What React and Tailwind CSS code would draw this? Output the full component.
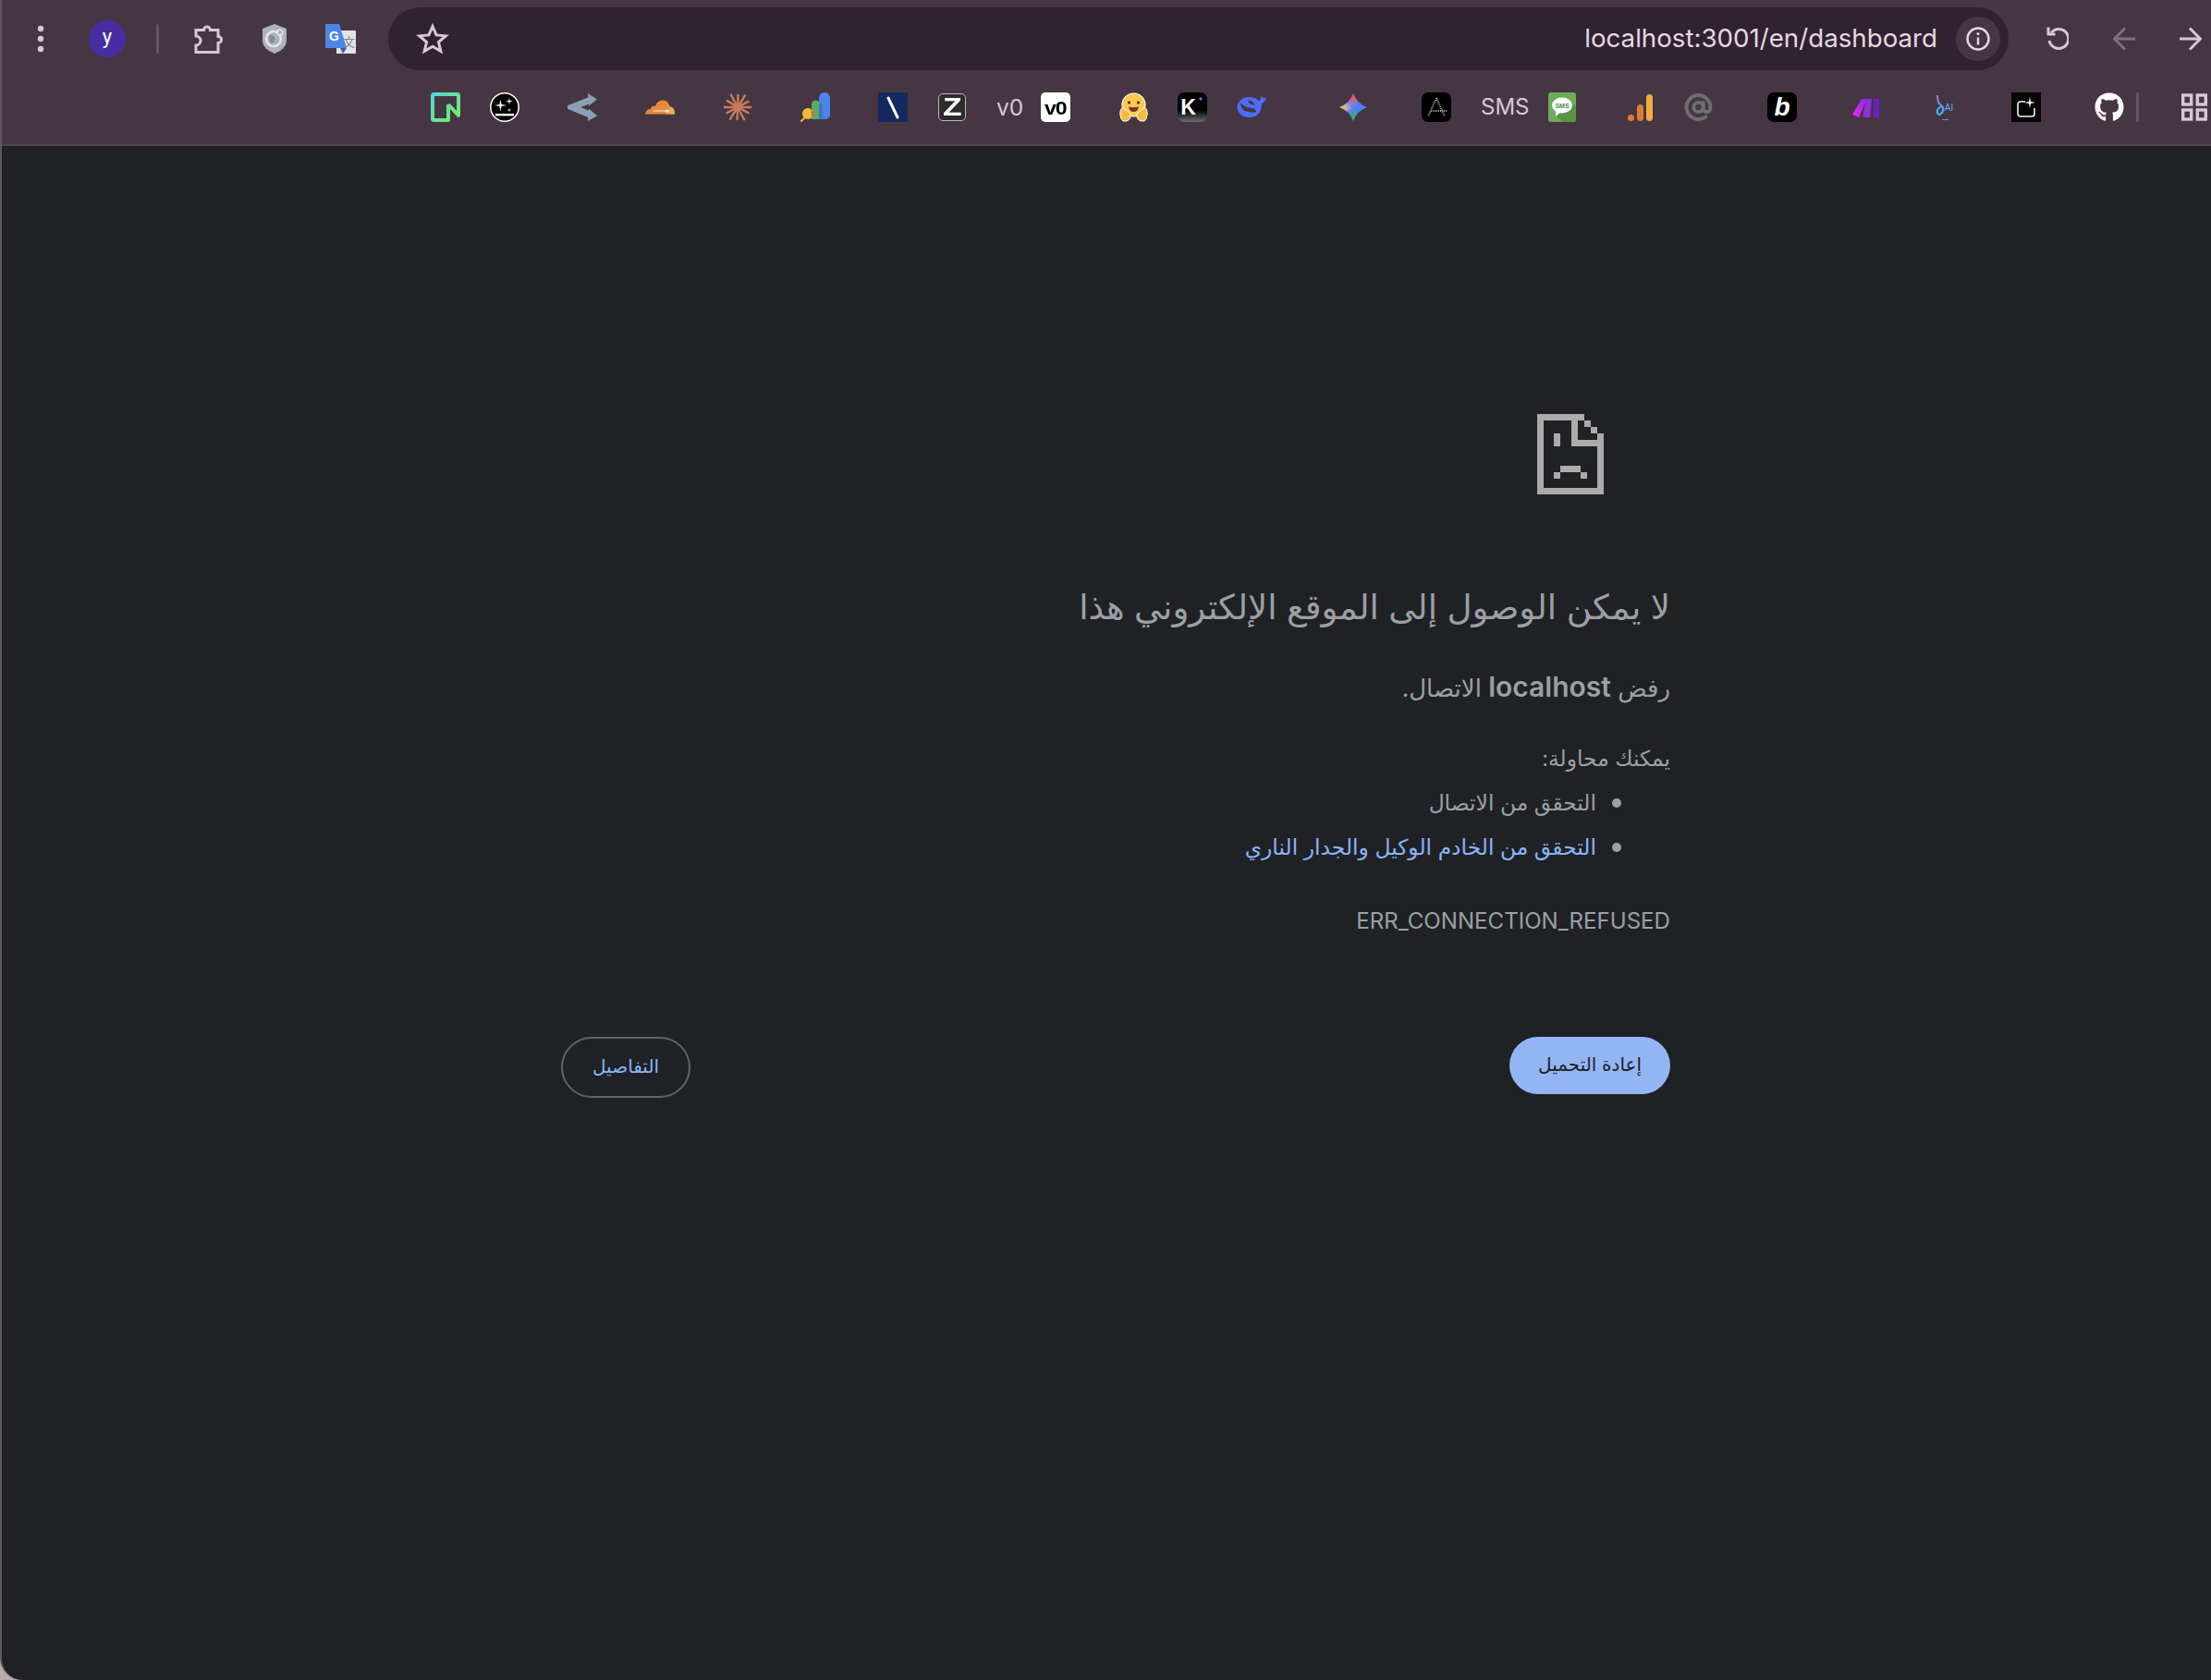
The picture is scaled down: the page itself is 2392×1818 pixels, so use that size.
import React from "react";
import { FaGithub } from "react-icons/fa";
import { AtSign } from "lucide-react";

const ui = "#d8c8d5";

function Puzzle() {
  return (
    <svg viewBox="0 0 32 32" className="ml-[38px] w-[32px] h-[32px]" fill="none" stroke={ui} strokeWidth="3" strokeLinejoin="miter">
      <path d="M2 6.5H10.5A3.5 3.5 0 0 1 17.5 6.5H26V13.5A3.5 3.5 0 0 1 26 20.5V30.5H2V23A5 5 0 0 0 2 13Z" />
    </svg>
  );
}

function Shield() {
  return (
    <svg viewBox="0 0 28 32" className="ml-[41px] w-[28px] h-[32px]">
      <path d="M14 0L27 5V18Q27 27 14 32Q1 27 1 18V5Z" fill="#aeb2ba" />
      <circle cx="13" cy="16" r="8" fill="none" stroke="#e6e7ea" strokeWidth="2.5" />
      <path d="M8 13Q12 10 14 14T11 22Q8 19 8 13Z" fill="#878c96" />
      <circle cx="20" cy="9" r="3" fill="#aeb2ba" stroke="#e6e7ea" strokeWidth="1.5" />
    </svg>
  );
}

function Translate() {
  return (
    <svg viewBox="0 0 33 32" className="ml-[41px] w-[33px] h-[32px]">
      <path d="M12 7H32Q33 7 33 8V31Q33 32 32 32H12Z" fill="#e3e3e3" />
      <path d="M19 32L16 26H23Z" fill="#3f5bb8" />
      <path d="M1 0H15L23 26H1Q0 26 0 25V1Q0 0 1 0Z" fill="#4d86e8" />
      <text x="9.5" y="18" textAnchor="middle" fontSize="14" fontWeight="700" fill="#fff" fontFamily="Liberation Sans, sans-serif">G</text>
      <text x="25.5" y="24" textAnchor="middle" fontSize="13" fill="#7d8a8f" fontFamily="Noto Sans CJK SC, sans-serif">文</text>
    </svg>
  );
}

function Neon() {
  return (
    <svg viewBox="0 0 32 32" className="ml-[466px] w-[32px] h-[32px]" fill="none">
      <defs>
        <linearGradient id="neon" x1="0" y1="0" x2="1" y2="1">
          <stop offset="0" stopColor="#52d5d6" />
          <stop offset="1" stopColor="#74ee5c" />
        </linearGradient>
      </defs>
      <path d="M19 13V30H3.5Q2 30 2 28.5V3.5Q2 2 3.5 2H28.5Q30 2 30 3.5V25L19 13" stroke="url(#neon)" strokeWidth="4" strokeLinejoin="round" />
    </svg>
  );
}

function Star4({ x, y, r }) {
  const k = r * 0.16;
  return <path d={`M${x} ${y - r}L${x + k} ${y - k}L${x + r} ${y}L${x + k} ${y + k}L${x} ${y + r}L${x - k} ${y + k}L${x - r} ${y}L${x - k} ${y - k}Z`} fill="#fff" />;
}

function StarsCircle() {
  return (
    <svg viewBox="0 0 32 32" className="ml-[32px] w-[32px] h-[32px]">
      <circle cx="16" cy="16" r="15.2" fill="#000" stroke="#fff" strokeWidth="1.5" />
      <Star4 x={11.5} y={14} r={6.5} />
      <Star4 x={21} y={9.5} r={4} />
      <Star4 x={21} y={19} r={2.5} />
      <rect x="6" y="23" width="20" height="2.4" fill="#fff" />
    </svg>
  );
}

function Arrows() {
  return (
    <svg viewBox="0 0 32 32" className="ml-[52px] w-[32px] h-[32px]" fill="#8c9fb6">
      <path d="M24 8.5L5 16L24 24" fill="none" stroke="#8c9fb6" strokeWidth="7" />
      <path d="M22 1L32 7.5L23 14.5Z" />
      <path d="M23 17.5L32 25.5L22 31Z" />
    </svg>
  );
}

function Cloudflare() {
  return (
    <svg viewBox="0 0 32 32" className="ml-[52px] w-[32px] h-[32px]">
      <path d="M0 23.5Q1 18 6 18Q7 14 11 15Q13 8 20 8.5Q25 9 26.5 15Q32 16 32 23.5Z" fill="#e88a3a" />
      <path d="M23 23.5Q25 18 27.5 15.5Q32 17 32 23.5Z" fill="#f0ad54" />
      <path d="M9 20H26" stroke="#fff" strokeWidth=".8" />
      <Star4 x={23.5} y={20} r={3} />
    </svg>
  );
}

function Claude() {
  const rays = [0, 28, 62, 92, 122, 152, 180, 212, 242, 272, 302, 332];
  return (
    <svg viewBox="0 0 30 32" className="ml-[53px] w-[30px] h-[32px]" stroke="#c87c5d" strokeWidth="2.4" strokeLinecap="round">
      {rays.map((a, i) => {
        const r = i % 2 ? 13 : 15;
        const t = (a * Math.PI) / 180;
        return <line key={a} x1="15" y1="16" x2={15 + r * Math.cos(t)} y2={16 + r * Math.sin(t)} />;
      })}
    </svg>
  );
}

function Ads() {
  return (
    <svg viewBox="0 0 32 32" className="ml-[53px] w-[32px] h-[32px]">
      <path d="M20 6a6 6 0 0 1 12 0V24a5 5 0 0 1-5 5H20Z" fill="#4a86e8" />
      <path d="M12 13a4.5 4.5 0 0 1 9 0V29H12Z" fill="#5cab5e" />
      <path d="M20 13V29H24V12Q22 11 20 13Z" fill="#3f74c9" />
      <path d="M1 31L6 26" stroke="#f0bb3c" strokeWidth="2" strokeLinecap="round" />
      <circle cx="8" cy="23" r="6" fill="#f0bb3c" />
      <path d="M12 18.5A6 6 0 0 1 12 27.5Z" fill="#d9574a" />
    </svg>
  );
}

function Backslash() {
  return (
    <svg viewBox="0 0 32 32" className="ml-[52px] w-[32px] h-[32px]">
      <rect width="32" height="32" fill="#14295f" />
      <path d="M11 6L21 27" stroke="#fff" strokeWidth="3" strokeLinecap="round" />
    </svg>
  );
}

function ZIcon() {
  return (
    <div className="ml-[33px] w-[30px] h-[30px] rounded-[5px] border border-[#b9b9b9] bg-[#2c2c2c] text-white flex items-center justify-center font-['Liberation_Sans',sans-serif] font-bold text-[27px] leading-none">
      <span className="block scale-x-125">Z</span>
    </div>
  );
}

function V0Icon() {
  return (
    <div className="ml-[21px] w-[32px] h-[32px] rounded-[5px] bg-white text-black flex items-center justify-center font-['Liberation_Sans',sans-serif] font-bold text-[21px] leading-none tracking-[-1px]">
      <span className="block scale-x-110">v0</span>
    </div>
  );
}

function Hug() {
  return (
    <svg viewBox="0 0 31 32" className="ml-[53px] w-[31px] h-[32px]">
      <circle cx="15.5" cy="13.5" r="12.5" fill="#fbc94c" stroke="#fff" strokeWidth="1.2" />
      <circle cx="10.5" cy="11" r="1.6" fill="#3a2a20" />
      <circle cx="20.5" cy="11" r="1.6" fill="#3a2a20" />
      <path d="M10 15.5Q15.5 17 21 15.5Q20 21 15.5 21T10 15.5Z" fill="#7e2f2f" />
      <path d="M.8 23Q1 17 4 16.5L12 23Q13 29 8 31H4Q1 29 .8 23Z" fill="#f9ba40" stroke="#fff" strokeWidth="1" />
      <path d="M30.2 23Q30 17 27 16.5L19 23Q18 29 23 31H27Q30 29 30.2 23Z" fill="#f9ba40" stroke="#fff" strokeWidth="1" />
    </svg>
  );
}

function KIcon() {
  return (
    <svg viewBox="0 0 32 32" className="ml-[32px] w-[32px] h-[32px]">
      <defs>
        <linearGradient id="kfade" x1="0" y1="0" x2="0" y2="1">
          <stop offset=".6" stopColor="#000" />
          <stop offset="1" stopColor="#6d6d6d" />
        </linearGradient>
      </defs>
      <rect width="32" height="32" rx="7" fill="url(#kfade)" />
      <text x="11.5" y="24" textAnchor="middle" fontSize="23" fontWeight="700" fill="#fff" fontFamily="Liberation Sans, sans-serif">K</text>
      <circle cx="25" cy="7" r="1.7" fill="#3d7bf0" />
    </svg>
  );
}

function Whale() {
  return (
    <svg viewBox="0 0 32 32" className="ml-[32px] w-[32px] h-[32px]">
      <ellipse cx="13.5" cy="16" rx="13" ry="11" fill="#4d6bfe" />
      <path d="M23 10Q26 9 26 4Q29 7 32 6Q31 10 27 12L26 17Z" fill="#4d6bfe" />
      <path d="M4 11Q4 20 12 21Q17 22 21 21Q20 17 16 17Q8 16 4 11Z" fill="#463643" />
      <path d="M12 9Q17 8 20 14L16 13Q13 12 12 9Z" fill="#463643" />
    </svg>
  );
}

function Gemini() {
  return (
    <svg viewBox="0 0 30 32" className="ml-[79px] w-[30px] h-[32px]">
      <defs>
        <clipPath id="gem">
          <path d="M15 1Q19 12 30 16Q19 20 15 31Q11 20 0 16Q11 12 15 1Z" />
        </clipPath>
        <filter id="gemblur"><feGaussianBlur stdDeviation="2" /></filter>
      </defs>
      <g clipPath="url(#gem)">
        <g filter="url(#gemblur)">
          <rect x="-5" y="-5" width="40" height="42" fill="#4a80f5" />
          <path d="M15 14L6 -3H24Z" fill="#e8584a" />
          <path d="M13 16L-4 8V24Z" fill="#f4c23c" />
          <path d="M15 18L6 35H24Z" fill="#45a95c" />
        </g>
      </g>
    </svg>
  );
}

function AIcon() {
  return (
    <svg viewBox="0 0 32 32" className="ml-[59px] w-[32px] h-[32px]">
      <rect width="32" height="32" rx="7" fill="#000" />
      <path d="M16 6L7 26M16 6L25 26M10 20H27" fill="none" stroke="#aaa" strokeWidth="2" strokeDasharray="1 1" />
    </svg>
  );
}

function SmsIcon() {
  return (
    <svg viewBox="0 0 30 32" className="ml-[22px] w-[30px] h-[32px]">
      <rect width="30" height="32" rx="3" fill="#6bad59" />
      <path d="M7 24L15 32H27Q30 32 30 29V16L24 8Z" fill="#5a9348" />
      <ellipse cx="15" cy="14" rx="11" ry="8.5" fill="#fff" />
      <path d="M8 19L8 26L14 21Z" fill="#fff" />
      <text x="15" y="16.5" textAnchor="middle" fontSize="7" fontWeight="700" fill="#4f8f3f" fontFamily="Liberation Sans, sans-serif">SMS</text>
    </svg>
  );
}

function Analytics() {
  return (
    <svg viewBox="0 0 27 32" className="ml-[56px] w-[27px] h-[32px]">
      <rect x="20" y="2" width="7" height="29" rx="3.5" fill="#f0ad3e" />
      <rect x="10" y="13" width="7" height="18" rx="3.5" fill="#db7d35" />
      <circle cx="3.5" cy="27.5" r="3.5" fill="#db7d35" />
    </svg>
  );
}

function BIcon() {
  return (
    <div className="ml-[59px] w-[32px] h-[32px] rounded-[7px] bg-black text-white flex items-center justify-center font-['Liberation_Sans',sans-serif] font-bold italic text-[28px] leading-none">
      b
    </div>
  );
}

function Make() {
  return (
    <svg viewBox="0 0 30 32" className="ml-[60px] w-[30px] h-[32px]">
      <defs>
        <linearGradient id="mk1" x1="0" y1="1" x2="1" y2="0">
          <stop offset="0" stopColor="#ee2bf2" />
          <stop offset="1" stopColor="#8a2be2" />
        </linearGradient>
      </defs>
      <path d="M10 7H16L7 27L0 24Z" fill="url(#mk1)" />
      <path d="M15 7H21L19 27H11Z" fill="#8d31d8" />
      <path d="M23 7H29V27H23Z" fill="#6a1fc4" />
    </svg>
  );
}

function BAi() {
  return (
    <svg viewBox="0 0 20 32" className="ml-[60px] w-[20px] h-[32px]">
      <defs>
        <linearGradient id="bai" x1="0" y1="0" x2="0" y2="1">
          <stop offset="0" stopColor="#c95ab8" />
          <stop offset=".55" stopColor="#4f9be8" />
          <stop offset="1" stopColor="#3ec6e0" />
        </linearGradient>
      </defs>
      <path d="M2 3Q2 12 6 14Q10 17 7 22Q3 26 2 22Q1 17 7 15" fill="none" stroke="url(#bai)" strokeWidth="2.2" />
      <text x="14.5" y="20" textAnchor="middle" fontSize="10" fill="#5ab0e8" fontFamily="Liberation Sans, sans-serif">AI</text>
      <rect x="7" y="29" width="7" height="1" fill="#7d8fb0" />
    </svg>
  );
}

function Spark() {
  return (
    <svg viewBox="0 0 32 32" className="ml-[62px] w-[32px] h-[32px]">
      <rect width="32" height="32" fill="#050505" />
      <path d="M15 10H10Q7 10 7 13V23Q7 26 10 26H22Q25 26 25 23V17" fill="none" stroke="#f2f2f2" strokeWidth="1.6" />
      <Star4 x={20} y={11} r={6} />
    </svg>
  );
}

function GridIcon() {
  return (
    <svg viewBox="0 0 28 32" className="ml-[46px] w-[28px] h-[32px]" fill="none" stroke={ui} strokeWidth="3.4">
      <rect x="1.7" y="3" width="9" height="10" />
      <rect x="17.3" y="3" width="9" height="10" />
      <rect x="1.7" y="19" width="9" height="10" />
      <rect x="17.3" y="19" width="9" height="10" />
    </svg>
  );
}

function SadFile() {
  return (
    <svg viewBox="39 24 216 261" className="w-[72px] h-[87px] mr-[72px]" fill="#ababab" shapeRendering="crispEdges">
      <rect x="39" y="24" width="153" height="21" />
      <rect x="39" y="24" width="21" height="261" />
      <rect x="39" y="264" width="216" height="21" />
      <rect x="234" y="87" width="21" height="198" />
      <rect x="150" y="24" width="21" height="105" />
      <rect x="150" y="108" width="105" height="21" />
      <rect x="192" y="45" width="21" height="21" />
      <rect x="213" y="66" width="21" height="21" />
      <rect x="93" y="87" width="21" height="42" />
      <rect x="114" y="192" width="66" height="21" />
      <rect x="93" y="213" width="21" height="21" />
      <rect x="180" y="213" width="21" height="21" />
    </svg>
  );
}

export default function App() {
  return (
    <div className="w-[2392px] h-[1818px] bg-[#b9abab] overflow-hidden font-['Inter','DejaVu_Sans',sans-serif]">
      <div className="w-full h-full flex flex-col bg-[#202124] border-l-2 border-[#5c585c] rounded-bl-[24px] overflow-hidden">
        <header className="h-[158px] -ml-[2px] shrink-0 bg-[#463643] border-b-2 border-[#554651]">
          <div className="h-[84px] flex items-center">
            <svg viewBox="0 0 8 30" className="ml-[40px] w-[8px] h-[30px]" fill={ui}>
              <circle cx="4" cy="4" r="3.2" />
              <circle cx="4" cy="15" r="3.2" />
              <circle cx="4" cy="26" r="3.2" />
            </svg>
            <div className="ml-[48px] w-[40px] h-[40px] rounded-full bg-[#462ea0] text-white flex items-center justify-center text-[22px] leading-none pb-[4px] font-['Roboto',sans-serif]">
              y
            </div>
            <div className="ml-[33px] w-[3px] h-[32px] rounded-full bg-[#65555f]" />
            <Puzzle />
            <Shield />
            <Translate />
            <div className="ml-[35px] w-[1753px] h-[68px] rounded-full bg-[#302230] flex items-center">
              <svg viewBox="0 0 24 24" className="ml-[30px] w-[36px] h-[36px]" fill="none" stroke={ui} strokeWidth="2" strokeLinejoin="miter">
                <path d="M12 3L14.7 9.3L21.5 9.9L16.3 14.4L17.9 21L12 17.5L6.1 21L7.7 14.4L2.5 9.9L9.3 9.3Z" />
              </svg>
              <div className="flex-1 text-right text-[27.7px] leading-none text-[#e6d8e3] mr-[20px]">
                localhost:3001/en/dashboard
              </div>
              <div className="mr-[9px] w-[48px] h-[48px] rounded-full bg-[#463643] flex items-center justify-center">
                <svg viewBox="0 0 26 26" className="w-[26px] h-[26px]" fill="none" stroke="#e6d8e3" strokeWidth="2.4">
                  <circle cx="13" cy="13" r="11.5" />
                  <path d="M13 11.5V19.5" />
                  <circle cx="13" cy="7.5" r="1.5" fill="#e6d8e3" stroke="none" />
                </svg>
              </div>
            </div>
            <svg viewBox="0 0 24 28" className="ml-[41px] w-[24px] h-[28px]" fill="none" stroke={ui} strokeWidth="3">
              <path d="M5 7.5A10.5 10.5 0 1 1 3 16" />
              <path d="M2 1.5V9H9.5" />
            </svg>
            <svg viewBox="0 0 24 26" className="ml-[48px] w-[24px] h-[26px]" fill="none" stroke="#826f7c" strokeWidth="3">
              <path d="M24 13H2M13 1.5L1.5 13L13 24.5" />
            </svg>
            <svg viewBox="0 0 24 26" className="ml-[48px] w-[24px] h-[26px]" fill="none" stroke={ui} strokeWidth="3">
              <path d="M0 13H22M11 1.5L22.5 13L11 24.5" />
            </svg>
          </div>
          <div className="h-[32px] mt-[16px] flex items-center">
            <Neon />
            <StarsCircle />
            <Arrows />
            <Cloudflare />
            <Claude />
            <Ads />
            <Backslash />
            <ZIcon />
            <div className="ml-[33px] w-[27px] text-[24.5px] leading-none text-[#d8c8d5] whitespace-nowrap">v0</div>
            <V0Icon />
            <Hug />
            <KIcon />
            <Whale />
            <Gemini />
            <AIcon />
            <div className="ml-[32px] w-[51px] text-[24px] leading-none text-[#d8c8d5] whitespace-nowrap">SMS</div>
            <SmsIcon />
            <Analytics />
            <AtSign className="ml-[34px] w-[31px] h-[32px] text-[#6e6e6e]" strokeWidth={3} />
            <BIcon />
            <Make />
            <BAi />
            <Spark />
            <FaGithub className="ml-[58px] w-[32px] h-[32px] text-white" />
            <div className="ml-[13px] w-[3px] h-[32px] rounded-full bg-[#65555f]" />
            <GridIcon />
          </div>
        </header>
        <main dir="rtl" className="w-[1200px] ml-[605px] pt-[290px] text-[#9aa0a6]">
          <SadFile />
          <h1 className="mt-[98px] text-[37.2px] leading-[48px] font-normal whitespace-nowrap">
            لا يمكن الوصول إلى الموقع الإلكتروني هذا
          </h1>
          <p className="mt-[38px] text-[26px] leading-[48px] whitespace-nowrap">
            رفض <strong className="font-semibold text-[30px]">localhost</strong> الاتصال.
          </p>
          <p className="mt-[28px] text-[23.4px] leading-[48px] whitespace-nowrap">يمكنك محاولة:</p>
          <ul className="mt-0">
            <li className="h-[48px] flex items-center text-[23.4px] whitespace-nowrap">
              <span className="mr-[53px] w-[10px] h-[10px] rounded-full bg-[#9aa0a6]" />
              <span className="mr-[17px]">التحقق من الاتصال</span>
            </li>
            <li className="h-[48px] flex items-center text-[23.4px] text-[#8ab4f8] whitespace-nowrap">
              <span className="mr-[53px] w-[10px] h-[10px] rounded-full bg-[#9aa0a6]" />
              <span className="mr-[17px]">التحقق من الخادم الوكيل والجدار الناري</span>
            </li>
          </ul>
          <p className="mt-[32px] text-[24.1px] leading-[48px]" dir="ltr">
            <span className="block text-right">ERR_CONNECTION_REFUSED</span>
          </p>
          <div className="mt-[101px] flex items-start justify-between">
            <button className="w-[174px] h-[62px] rounded-full bg-[#93b5f4] text-[#202124] text-[20px] pb-[3px]">إعادة التحميل</button>
            <button className="w-[140px] h-[66px] rounded-full border-2 border-[#5f6368] text-[#8ab4f8] text-[20px] pb-[3px]">التفاصيل</button>
          </div>
        </main>
      </div>
    </div>
  );
}
